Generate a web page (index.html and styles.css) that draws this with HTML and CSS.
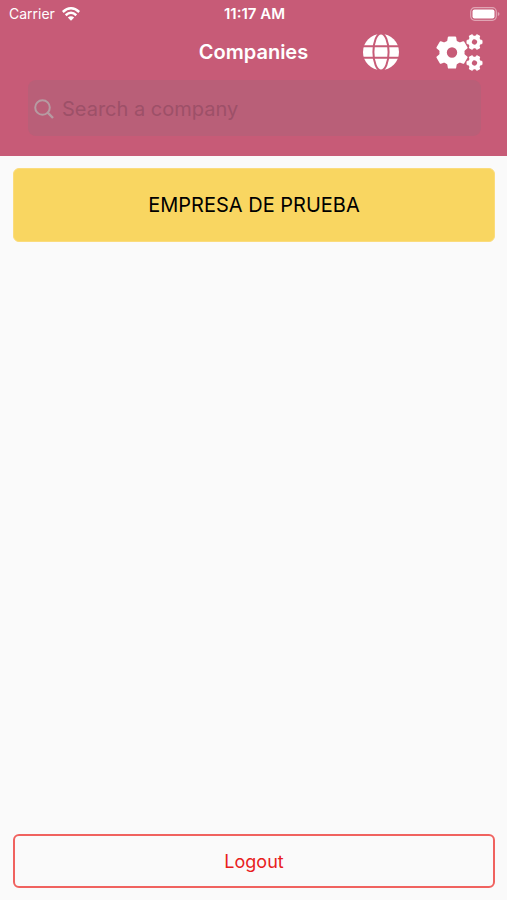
FILE: index.html
```
<!DOCTYPE html>
<html lang="en">
<head>
    <meta charset="UTF-8">
    <meta name="viewport" content="width=device-width, initial-scale=1.0">
    <title>Companies</title>
    <link rel="stylesheet" href="styles.css">
</head>
<body>
    <header class="header">
        <div class="status-bar">
            <div class="carrier">
                <span>Carrier</span>
                <svg class="wifi" viewBox="0 0 18 14" aria-hidden="true">
                    <path d="M.8 5Q9-2.400 17.200 5M3.700 8.200Q9 3.400 14.300 8.200" fill="none" stroke="#fff" stroke-width="2.500"/>
                    <path d="M5.800 10.600Q9 7.800 12.200 10.600L9 13.700Z" fill="#fff"/>
                </svg>
            </div>
            <span class="time">11:17 AM</span>
            <svg class="battery" viewBox="0 0 30 14" aria-hidden="true">
                <rect x=".7" y=".7" width="25.600" height="12.600" rx="4" fill="none" stroke="#fff" stroke-opacity=".45" stroke-width="1.200"/>
                <rect x="2.500" y="2.500" width="22" height="9" rx="2" fill="#fff"/>
                <path d="M27.800 5v4q1.700-.6 1.700-2t-1.700-2z" fill="#fff" fill-opacity=".45"/>
            </svg>
        </div>

        <div class="nav">
            <h1>Companies</h1>
            <div class="nav-actions">
                <button type="button" class="icon-button" aria-label="Language">
                    <svg class="globe" viewBox="0 0 36 36">
                        <circle cx="18" cy="18" r="18" fill="#fff"/>
                        <g fill="none" stroke="#c75b77" stroke-width="2">
                            <path d="M0 12.200h36M0 23.800h36"/>
                            <ellipse cx="18" cy="18" rx="7.600" ry="18.600"/>
                        </g>
                    </svg>
                </button>
                <button type="button" class="icon-button" aria-label="Settings">
                    <svg class="gears" viewBox="0 0 48 38">
                        <defs>
                            <g id="gear">
                                <circle r="8.900" fill="none" stroke="#fff" stroke-width="7.400"/>
                                <g fill="#fff" stroke="#fff" stroke-width="2" stroke-linejoin="round">
                                    <path id="teeth" d="M-3.200-15L-4-10H4L3.200-15ZM-3.200 15L-4 10H4L3.200 15Z"/>
                                    <use href="#teeth" transform="rotate(60)"/>
                                    <use href="#teeth" transform="rotate(120)"/>
                                </g>
                            </g>
                        </defs>
                        <use href="#gear" transform="translate(17 19.500)"/>
                        <use href="#gear" transform="translate(39.500 9) rotate(30) scale(.5)"/>
                        <use href="#gear" transform="translate(39.500 30) rotate(30) scale(.5)"/>
                    </svg>
                </button>
            </div>
        </div>

        <div class="search">
            <label for="search" aria-label="Search a company">
                <svg class="search-icon" viewBox="0 0 20 20" fill="none" stroke="#b69ba2" stroke-width="2">
                    <circle cx="8.500" cy="8.500" r="7.300"/>
                    <path d="M13.700 13.700L19 19" stroke-width="2.400"/>
                </svg>
            </label>
            <input type="text" id="search" placeholder="Search a company">
        </div>
    </header>

    <main class="companies">
        <button type="button" class="company">EMPRESA DE PRUEBA</button>
    </main>

    <footer class="footer">
        <button type="button" class="logout">Logout</button>
    </footer>
</body>
</html>
```
FILE: styles.css
```
* {
    margin: 0;
    padding: 0;
    box-sizing: border-box;
    font-family: Inter, 'Liberation Sans', sans-serif;
}

body {
    background: #fafafa;
    min-height: 100vh;
    display: flex;
    flex-direction: column;
}

svg {
    display: block;
}

button {
    cursor: pointer;
}

.header {
    background: #c75b77;
    color: #fff;
    padding-bottom: 20px;
}

.status-bar {
    display: grid;
    grid-template-columns: 1fr auto 1fr;
    align-items: center;
    height: 27px;
    padding: 0 7px 0 9px;
    font-size: 14px;
}

.carrier {
    display: flex;
    align-items: center;
    gap: 7px;
}

.wifi {
    width: 18px;
    height: 14px;
}

.time {
    font-size: 15px;
    font-weight: 600;
}

.battery {
    width: 30px;
    height: 14px;
    justify-self: end;
}

.nav {
    display: grid;
    grid-template-columns: 1fr auto 1fr;
    align-items: center;
    height: 50px;
    padding: 0 24px;
}

h1 {
    grid-column: 2;
    font-size: 20px;
    font-weight: 600;
}

.nav-actions {
    display: flex;
    justify-content: flex-end;
    gap: 36px;
}

.icon-button {
    border: none;
    background: none;
}

.globe {
    width: 36px;
    height: 36px;
}

.gears {
    width: 48px;
    height: 38px;
}

.search {
    display: flex;
    align-items: center;
    gap: 8px;
    height: 56px;
    margin: 3px 26px 0 28px;
    padding: 2px 6px 0;
    border-radius: 8px;
    background: #b95f78;
}

.search-icon {
    width: 20px;
    height: 20px;
}

.search input {
    flex: 1;
    min-width: 0;
    border: none;
    outline: none;
    background: none;
    color: #fff;
    font-size: 20px;
}

.search input::placeholder {
    color: #9d5068;
    opacity: 1;
}

.companies {
    flex: 1;
    padding: 12px 12px 12px 13px;
}

.company {
    width: 100%;
    height: 74px;
    border: 1px solid #fbdc7c;
    border-radius: 6px;
    background: #f9d661;
    color: #000;
    font-size: 20px;
}

.footer {
    padding: 12px 12px 12px 13px;
}

.logout {
    width: 100%;
    height: 54px;
    border: 2px solid #f0625f;
    border-radius: 6px;
    background: none;
    color: #e8201c;
    font-size: 18px;
}
```
